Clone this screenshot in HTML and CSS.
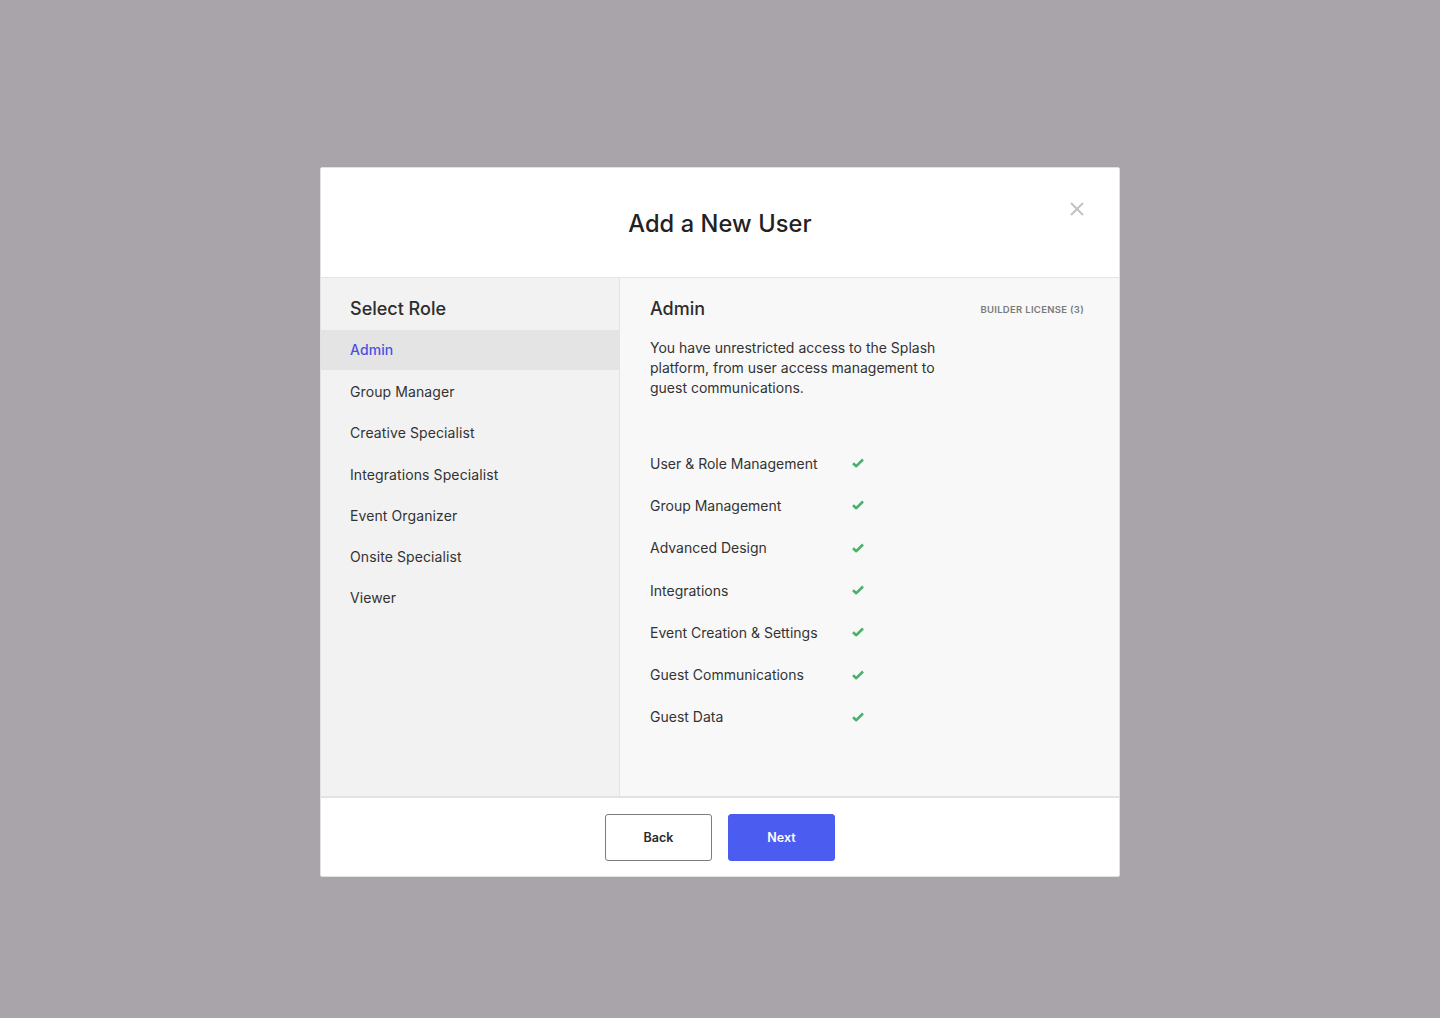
FILE: index.html
```html
<!DOCTYPE html>
<html>
<head>
<meta charset="utf-8">
<link rel="stylesheet" href="styles.css">
</head>
<body>
<div class="overlay">
  <div class="modal">
    <div class="modal-header">
      <h1 class="title">Add a New User</h1>
      <button class="close" aria-label="Close">
        <svg width="16" height="16" viewBox="0 0 16 16"><path d="M2 2 L14 14 M14 2 L2 14" stroke="#c2c2c2" stroke-width="2" fill="none"/></svg>
      </button>
    </div>
    <div class="modal-body">
      <div class="roles">
        <h2 class="section-title">Select Role</h2>
        <ul class="role-list">
          <li class="role active">Admin</li>
          <li class="role">Group Manager</li>
          <li class="role">Creative Specialist</li>
          <li class="role">Integrations Specialist</li>
          <li class="role">Event Organizer</li>
          <li class="role">Onsite Specialist</li>
          <li class="role">Viewer</li>
        </ul>
      </div>
      <div class="details">
        <div class="details-head">
          <h2 class="section-title">Admin</h2>
          <span class="license">BUILDER LICENSE (3)</span>
        </div>
        <p class="desc">You have unrestricted access to the Splash platform, from user access management to guest communications.</p>
        <ul class="perms">
          <li class="perm"><span>User &amp; Role Management</span><svg class="check" width="12" height="10" viewBox="0 0 12 10"><path d="M1 5.2 L4.3 8.2 L11 1.5" stroke="#48b26b" stroke-width="2.6" fill="none" stroke-linejoin="round"/></svg></li>
          <li class="perm"><span>Group Management</span><svg class="check" width="12" height="10" viewBox="0 0 12 10"><path d="M1 5.2 L4.3 8.2 L11 1.5" stroke="#48b26b" stroke-width="2.6" fill="none" stroke-linejoin="round"/></svg></li>
          <li class="perm"><span>Advanced Design</span><svg class="check" width="12" height="10" viewBox="0 0 12 10"><path d="M1 5.2 L4.3 8.2 L11 1.5" stroke="#48b26b" stroke-width="2.6" fill="none" stroke-linejoin="round"/></svg></li>
          <li class="perm"><span>Integrations</span><svg class="check" width="12" height="10" viewBox="0 0 12 10"><path d="M1 5.2 L4.3 8.2 L11 1.5" stroke="#48b26b" stroke-width="2.6" fill="none" stroke-linejoin="round"/></svg></li>
          <li class="perm"><span>Event Creation &amp; Settings</span><svg class="check" width="12" height="10" viewBox="0 0 12 10"><path d="M1 5.2 L4.3 8.2 L11 1.5" stroke="#48b26b" stroke-width="2.6" fill="none" stroke-linejoin="round"/></svg></li>
          <li class="perm"><span>Guest Communications</span><svg class="check" width="12" height="10" viewBox="0 0 12 10"><path d="M1 5.2 L4.3 8.2 L11 1.5" stroke="#48b26b" stroke-width="2.6" fill="none" stroke-linejoin="round"/></svg></li>
          <li class="perm"><span>Guest Data</span><svg class="check" width="12" height="10" viewBox="0 0 12 10"><path d="M1 5.2 L4.3 8.2 L11 1.5" stroke="#48b26b" stroke-width="2.6" fill="none" stroke-linejoin="round"/></svg></li>
        </ul>
      </div>
    </div>
    <div class="modal-footer">
      <button class="btn btn-back">Back</button>
      <button class="btn btn-next">Next</button>
    </div>
  </div>
</div>
</body>
</html>
```

FILE: styles.css
```css
* { box-sizing: border-box; }
html, body { margin: 0; padding: 0; }
body {
  background: #a8a4a9;
  font-family: Inter, "Noto Sans", sans-serif;
  color: #333;
}
.overlay {
  width: 1440px;
  height: 1018px;
  display: flex;
  justify-content: center;
  padding-top: 167px;
}
.modal {
  width: 800px;
  height: 710px;
  background: #fff;
  border: 1px solid #e2e2e2;
  border-radius: 2px;
  display: flex;
  flex-direction: column;
}
.modal-header {
  height: 110px;
  flex: none;
  position: relative;
  display: flex;
  align-items: center;
  justify-content: center;
  border-bottom: 1px solid #e4e4e4;
}
.title {
  margin: 0;
  font-size: 23.6px;
  font-weight: 500;
  color: #222;
  letter-spacing: 0.1px;
  padding-top: 2px;
}
.close {
  position: absolute;
  top: 33px;
  right: 34px;
  background: none;
  border: 0;
  padding: 0;
  width: 16px;
  height: 16px;
}
.close svg { display: block; }
.modal-body {
  flex: 1;
  display: flex;
  background: #f8f8f8;
}
.roles {
  width: 299px;
  flex: none;
  background: #f2f2f2;
  border-right: 1px solid #e4e4e4;
  border-bottom: 1px solid #e4e4e4;
  padding-top: 20px;
}
.section-title {
  margin: 0;
  font-size: 18px;
  font-weight: 500;
  color: #2d2d2d;
  line-height: 22px;
}
.roles .section-title { padding-left: 29px; }
.role-list {
  list-style: none;
  margin: 10px 0 0;
  padding: 0;
}
.role {
  height: 41.3px;
  line-height: 41px;
  padding-left: 29px;
  font-size: 14px;
  color: #333;
  letter-spacing: 0.1px;
}
.role.active {
  background: #e4e4e4;
  color: #4a52e0;
  font-weight: 500;
  height: 40px;
  line-height: 40px;
  margin-bottom: 1px;
}
.details {
  flex: 1;
  padding: 20px 35px 0 30px;
  border-bottom: 1px solid #e4e4e4;
}
.details-head {
  display: flex;
  justify-content: space-between;
  align-items: center;
}
.license {
  font-size: 9.5px;
  font-weight: 600;
  color: #7a7a7a;
  letter-spacing: 0.3px;
}
.desc {
  margin: 18px 0 0;
  width: 300px;
  font-size: 14px;
  line-height: 20px;
  color: #333;
}
.perms {
  list-style: none;
  margin: 44px 0 0;
  padding: 0;
}
.perm {
  display: flex;
  align-items: center;
  height: 42.3px;
  font-size: 14px;
  color: #333;
}
.perm span { width: 202px; }
.check { display: block; }
.modal-footer {
  height: 79px;
  flex: none;
  display: flex;
  justify-content: center;
  align-items: center;
  gap: 16px;
  border-top: 1px solid #e2e2e6;
}
.btn {
  width: 107px;
  height: 47px;
  border-radius: 3px;
  font-family: Inter, "Noto Sans", sans-serif;
  font-size: 12.5px;
  font-weight: 600;
}
.btn-back {
  background: #fff;
  border: 1px solid #7c7c7c;
  color: #2a2a2a;
}
.btn-next {
  background: #4b5cf0;
  border: 1px solid #4b5cf0;
  color: #fff;
}
```
